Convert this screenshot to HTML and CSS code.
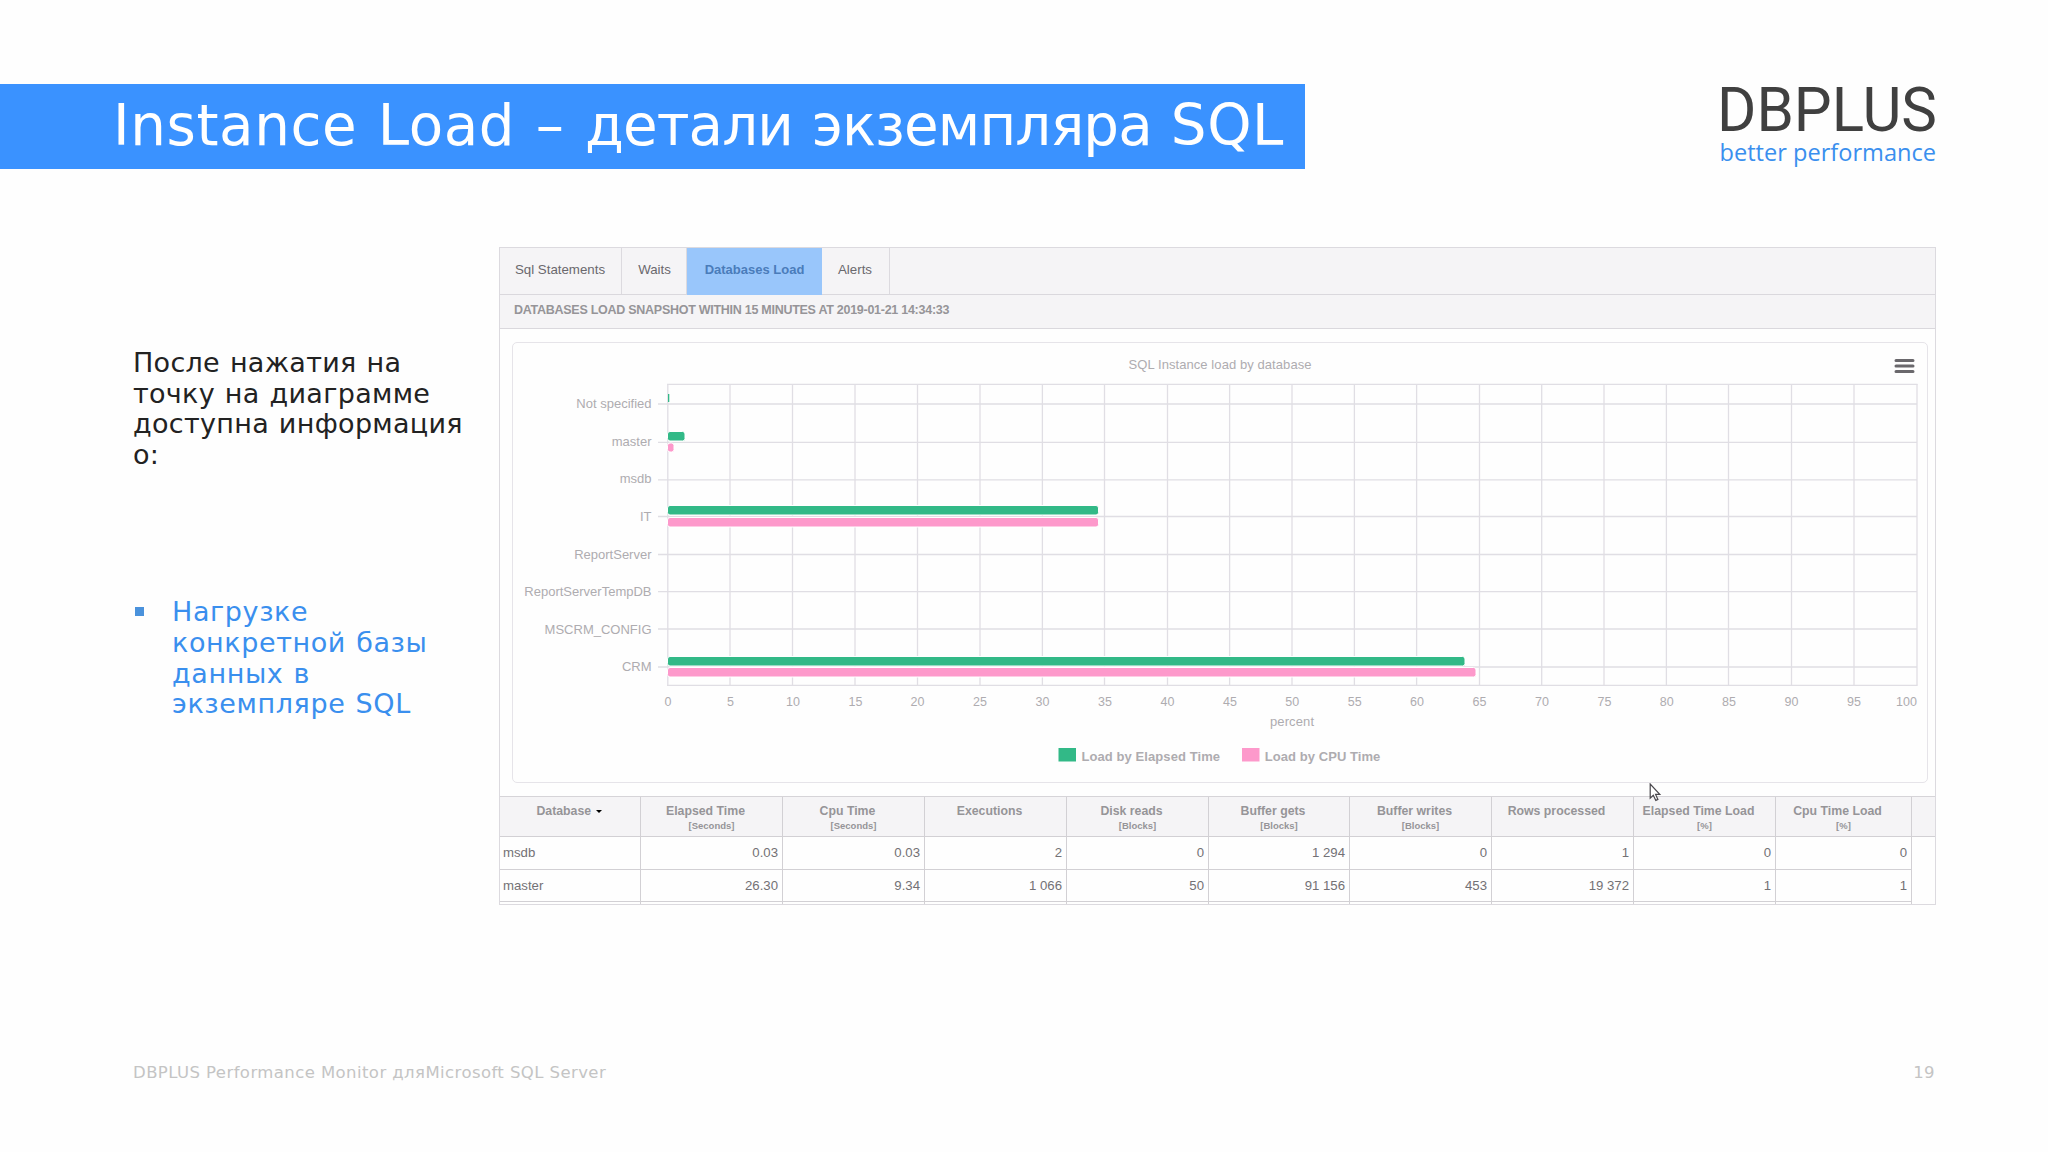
FILE: index.html
```html
<!DOCTYPE html>
<html lang="ru">
<head>
    <meta charset="UTF-8">
    <title>Instance Load – детали экземпляра SQL</title>
    <link rel="stylesheet" href="styles.css">
</head>
<body>
    <header>
        <h1>Instance Load – <span>детали экземпляра </span>SQL</h1>
        <svg class="logo" width="216" height="88" viewBox="1720 84 216 88">
            <text class="logo-name" x="1717" y="130.7" textLength="220" lengthAdjust="spacingAndGlyphs">DBPLUS</text>
            <text class="logo-tag" x="1719.5" y="160.7" textLength="216.5" lengthAdjust="spacingAndGlyphs">better performance</text>
        </svg>
    </header>

    <main>
        <aside>
            <p>После нажатия на<br>точку на диаграмме<br>доступна информация<br>о:</p>
            <ul>
                <li>Нагрузке<br>конкретной базы<br>данных в<br>экземпляре SQL</li>
            </ul>
        </aside>

        <section class="panel">
            <nav>
                <a class="tab tab-sql">Sql Statements</a>
                <a class="tab tab-waits">Waits</a>
                <a class="tab tab-load active">Databases Load</a>
                <a class="tab tab-alerts">Alerts</a>
            </nav>
            <h2>DATABASES LOAD SNAPSHOT WITHIN 15 MINUTES AT 2019-01-21 14:34:33</h2>

            <!-- Chart -->
            <div class="chart">
                <svg width="1414" height="439" viewBox="513 343 1414 439">
                    <text x="1128.5" y="368.5" textLength="183">SQL Instance load by database</text>
                    <path class="menu" d="M1896 360.5h17M1896 366h17M1896 371.5h17"/>

                    <path class="grid" d="M667.8 384V685.5M730 384V685.5M792.5 384V685.5M855 384V685.5M917.5 384V685.5M980 384V685.5M1042.4 384V685.5M1104.5 384V685.5M1167.5 384V685.5M1229.6 384V685.5M1292 384V685.5M1354.4 384V685.5M1416.6 384V685.5M1479.5 384V685.5M1541.7 384V685.5M1604 384V685.5M1666.4 384V685.5M1728.5 384V685.5M1791.5 384V685.5M1854 384V685.5M1917 384V685.5"/>
                    <path class="grid" d="M667 384.3H1917.5M658 404H1917M658 442.3H1917M658 479.8H1917M658 516.5H1917M658 554.5H1917M658 591.7H1917M658 629H1917M658 667H1917M667 685.4H1917.5"/>

                    <rect class="green" x="668" y="394" width="1.3" height="8"/>
                    <g class="elapsed">
                        <rect x="667.5" y="431.5" width="17.5" height="9.5" rx="2.5"/>
                        <rect x="667.5" y="505.5" width="431" height="9.5" rx="2.5"/>
                        <rect x="667.5" y="656.5" width="797.5" height="9.5" rx="2.5"/>
                    </g>
                    <g class="cpu">
                        <rect x="667.5" y="443" width="6.5" height="9" rx="2.5"/>
                        <rect x="667.5" y="517.5" width="431" height="9.5" rx="2.5"/>
                        <rect x="667.5" y="667.5" width="808.5" height="9.5" rx="2.5"/>
                    </g>

                    <g class="names">
                        <text x="651.5" y="408">Not specified</text>
                        <text x="651.5" y="446">master</text>
                        <text x="651.5" y="483">msdb</text>
                        <text x="651.5" y="520.7">IT</text>
                        <text x="651.5" y="558.7">ReportServer</text>
                        <text x="651.5" y="595.7">ReportServerTempDB</text>
                        <text x="651.5" y="633.7">MSCRM_CONFIG</text>
                        <text x="651.5" y="670.5">CRM</text>
                    </g>
                    <g class="ticks">
                        <text x="668" y="705.5">0</text>
                        <text x="730.5" y="705.5">5</text>
                        <text x="793" y="705.5">10</text>
                        <text x="855.5" y="705.5">15</text>
                        <text x="917.5" y="705.5">20</text>
                        <text x="980" y="705.5">25</text>
                        <text x="1042.5" y="705.5">30</text>
                        <text x="1105" y="705.5">35</text>
                        <text x="1167.5" y="705.5">40</text>
                        <text x="1230" y="705.5">45</text>
                        <text x="1292.3" y="705.5">50</text>
                        <text x="1354.7" y="705.5">55</text>
                        <text x="1417" y="705.5">60</text>
                        <text x="1479.5" y="705.5">65</text>
                        <text x="1542" y="705.5">70</text>
                        <text x="1604.4" y="705.5">75</text>
                        <text x="1666.7" y="705.5">80</text>
                        <text x="1729" y="705.5">85</text>
                        <text x="1791.5" y="705.5">90</text>
                        <text x="1854" y="705.5">95</text>
                        <text x="1906.5" y="705.5">100</text>
                    </g>
                    <text x="1270" y="725.7" textLength="44">percent</text>

                    <g class="legend">
                        <rect class="green" x="1058.5" y="748" width="17.5" height="13.5"/>
                        <text x="1081.5" y="760.5" textLength="138.5">Load by Elapsed Time</text>
                        <rect class="pink" x="1242" y="748" width="17.5" height="13.5"/>
                        <text x="1264.8" y="760.5" textLength="115.5">Load by CPU Time</text>
                    </g>
                </svg>
            </div>

            <!-- Databases table -->
            <table>
                <colgroup>
                    <col class="narrow"><col><col><col><col><col class="narrow"><col><col><col><col class="last"><col class="rest">
                </colgroup>
                <thead>
                    <tr>
                        <th><b>Database <i class="sort"></i></b></th>
                        <th><b>Elapsed Time</b><small>[Seconds]</small></th>
                        <th><b>Cpu Time</b><small>[Seconds]</small></th>
                        <th><b>Executions</b></th>
                        <th><b>Disk reads</b><small>[Blocks]</small></th>
                        <th><b>Buffer gets</b><small>[Blocks]</small></th>
                        <th><b>Buffer writes</b><small>[Blocks]</small></th>
                        <th><b>Rows processed</b></th>
                        <th><b>Elapsed Time Load</b><small>[%]</small></th>
                        <th><b>Cpu Time Load</b><small>[%]</small></th>
                        <th></th>
                    </tr>
                </thead>
                <tbody>
                    <tr>
                        <td>msdb</td><td>0.03</td><td>0.03</td><td>2</td><td>0</td><td>1 294</td><td>0</td><td>1</td><td>0</td><td>0</td><td></td>
                    </tr>
                    <tr>
                        <td>master</td><td>26.30</td><td>9.34</td><td>1 066</td><td>50</td><td>91 156</td><td>453</td><td>19 372</td><td>1</td><td>1</td><td></td>
                    </tr>
                    <tr class="cut">
                        <td></td><td></td><td></td><td></td><td></td><td></td><td></td><td></td><td></td><td></td><td></td>
                    </tr>
                </tbody>
            </table>

            <svg class="cursor" width="14" height="20" viewBox="0 0 14 20">
                <path d="M1.2 1V15.2L4.3 12.2L6.8 17.4L8.9 16.4L6.6 11.4H10.8Z"/>
            </svg>
        </section>
    </main>

    <footer>
        <span>DBPLUS Performance Monitor дляMicrosoft SQL Server</span>
        <span>19</span>
    </footer>
</body>
</html>
```
FILE: styles.css
```css
* {
    box-sizing: border-box;
}
body {
    margin: 0;
    height: 1152px;
    padding-top: 84px;
    overflow: hidden;
    display: flex;
    flex-direction: column;
    background-color: #fefefe;
    font-family: "DejaVu Sans", sans-serif;
}
header {
    display: flex;
    justify-content: space-between;
    height: 163px;
    padding-right: 112px;
}
h1 {
    margin: 0;
    width: 1305px;
    height: 85px;
    padding-left: 113px;
    background-color: #3a92ff;
    color: #fff;
    font-size: 56.3px;
    font-weight: normal;
    line-height: 83px;
    white-space: nowrap;
    letter-spacing: 0.6px;
    word-spacing: 2px;
}
h1 span {
    letter-spacing: -0.9px;
}
.logo {
    overflow: visible;
}
.logo-name {
    font: 400 61px Roboto, sans-serif;
    fill: #404040;
}
.logo-tag {
    font: 24px "Open Sans", sans-serif;
    fill: #3a8fee;
}
main {
    display: flex;
    height: 658px;
    padding-left: 133px;
}
aside {
    width: 366px;
    padding-top: 101px;
    font-size: 27px;
    line-height: 30.7px;
    color: #222;
    white-space: nowrap;
    letter-spacing: 0.3px;
    word-spacing: 1px;
}
aside p {
    margin: 0 0 126.5px;
}
ul {
    margin: 0;
    padding: 0;
    list-style: none;
    color: #3a8fee;
    letter-spacing: 0.6px;
}
li {
    display: flex;
    padding-left: 2px;
}
li::before {
    content: "";
    width: 9px;
    height: 9px;
    margin: 10px 28px 0 0;
    background-color: #4a92dc;
}

/* Application window */
.panel {
    position: relative;
    width: 1437px;
    border: 1px solid #dcdadf;
    overflow: hidden;
    background-color: #fefefe;
    font-family: "Liberation Sans", Arial, sans-serif;
}
nav {
    display: flex;
    height: 47px;
    background-color: #f5f4f6;
    border-bottom: 1px solid #dad8dd;
}
.tab {
    height: 46px;
    border-right: 1px solid #dcdadf;
    font-size: 13.3px;
    line-height: 43px;
    text-align: center;
    color: #6a686d;
}
.tab-sql {
    width: 122px;
    padding-right: 1px;
}
.tab-waits {
    width: 65px;
    padding-left: 1px;
}
.tab-load {
    width: 135px;
}
.tab-alerts {
    width: 68px;
    padding-right: 1px;
}
.active {
    height: 47px;
    border: 0;
    background-color: #99c6fb;
    color: #4a7cba;
    font-weight: bold;
    font-size: 13px;
}
h2 {
    margin: 0;
    height: 34px;
    padding-left: 14px;
    background-color: #f5f4f6;
    border-bottom: 1px solid #dad8dd;
    color: #969498;
    font-size: 12.5px;
    line-height: 31px;
    white-space: nowrap;
    letter-spacing: -0.27px;
}
.chart {
    width: 1416px;
    height: 441px;
    margin: 13px 0 13px 12px;
    border: 1px solid #e6e4e9;
    border-radius: 5px;
}
.chart svg {
    display: block;
}
.chart text {
    font-size: 13px;
    fill: #aeacb0;
}
.menu {
    stroke: #6a686c;
    stroke-width: 3;
    stroke-linecap: round;
}
.grid {
    fill: none;
    stroke: #e0dee4;
    stroke-width: 1.3;
}
.elapsed, .cpu {
    stroke: #fff;
}
.elapsed, .green {
    fill: #32b987;
}
.cpu, .pink {
    fill: #fd99cb;
}
.names {
    text-anchor: end;
}
.ticks {
    text-anchor: middle;
}
.chart .ticks text {
    font-size: 12.5px;
}
.chart .legend text {
    font-weight: bold;
}
table {
    width: 1435px;
    table-layout: fixed;
    border-spacing: 0;
    border-top: 1px solid #d6d4d8;
}
col {
    width: 142px;
}
col.narrow {
    width: 141px;
}
col.last {
    width: 136px;
}
col.rest {
    width: auto;
}
th, td {
    padding: 0 4px;
    border-right: 1px solid #d2d0d4;
    border-bottom: 1px solid #d2d0d4;
    white-space: nowrap;
}
th {
    height: 40px;
    padding: 5px 0 0;
    vertical-align: top;
    background-color: #f5f4f6;
    color: #969498;
}
th b {
    display: block;
    padding-right: 12px;
    font-size: 12.3px;
    line-height: 18px;
}
th small {
    display: block;
    font-size: 9.5px;
    line-height: 12px;
}
.sort {
    display: inline-block;
    margin: 0 -10px 2px 1px;
    border: 3.5px solid transparent;
    border-top-color: #000;
    border-bottom: 0;
}
td {
    height: 32.5px;
    font-size: 13.2px;
    text-align: right;
    color: #737175;
}
td:first-child {
    padding-left: 3px;
    text-align: left;
}
th:last-child {
    border-right: 0;
}
td:last-child {
    border: 0;
}
.cut td {
    height: 20px;
}
.cursor {
    position: absolute;
    left: 1149px;
    top: 535px;
    fill: #fff;
    stroke: #49474c;
    stroke-width: 1.2;
}
footer {
    display: flex;
    justify-content: space-between;
    padding: 158px 113px 0 133px;
    color: #c4c4c4;
    font-size: 16.5px;
    letter-spacing: 0.42px;
}
```
